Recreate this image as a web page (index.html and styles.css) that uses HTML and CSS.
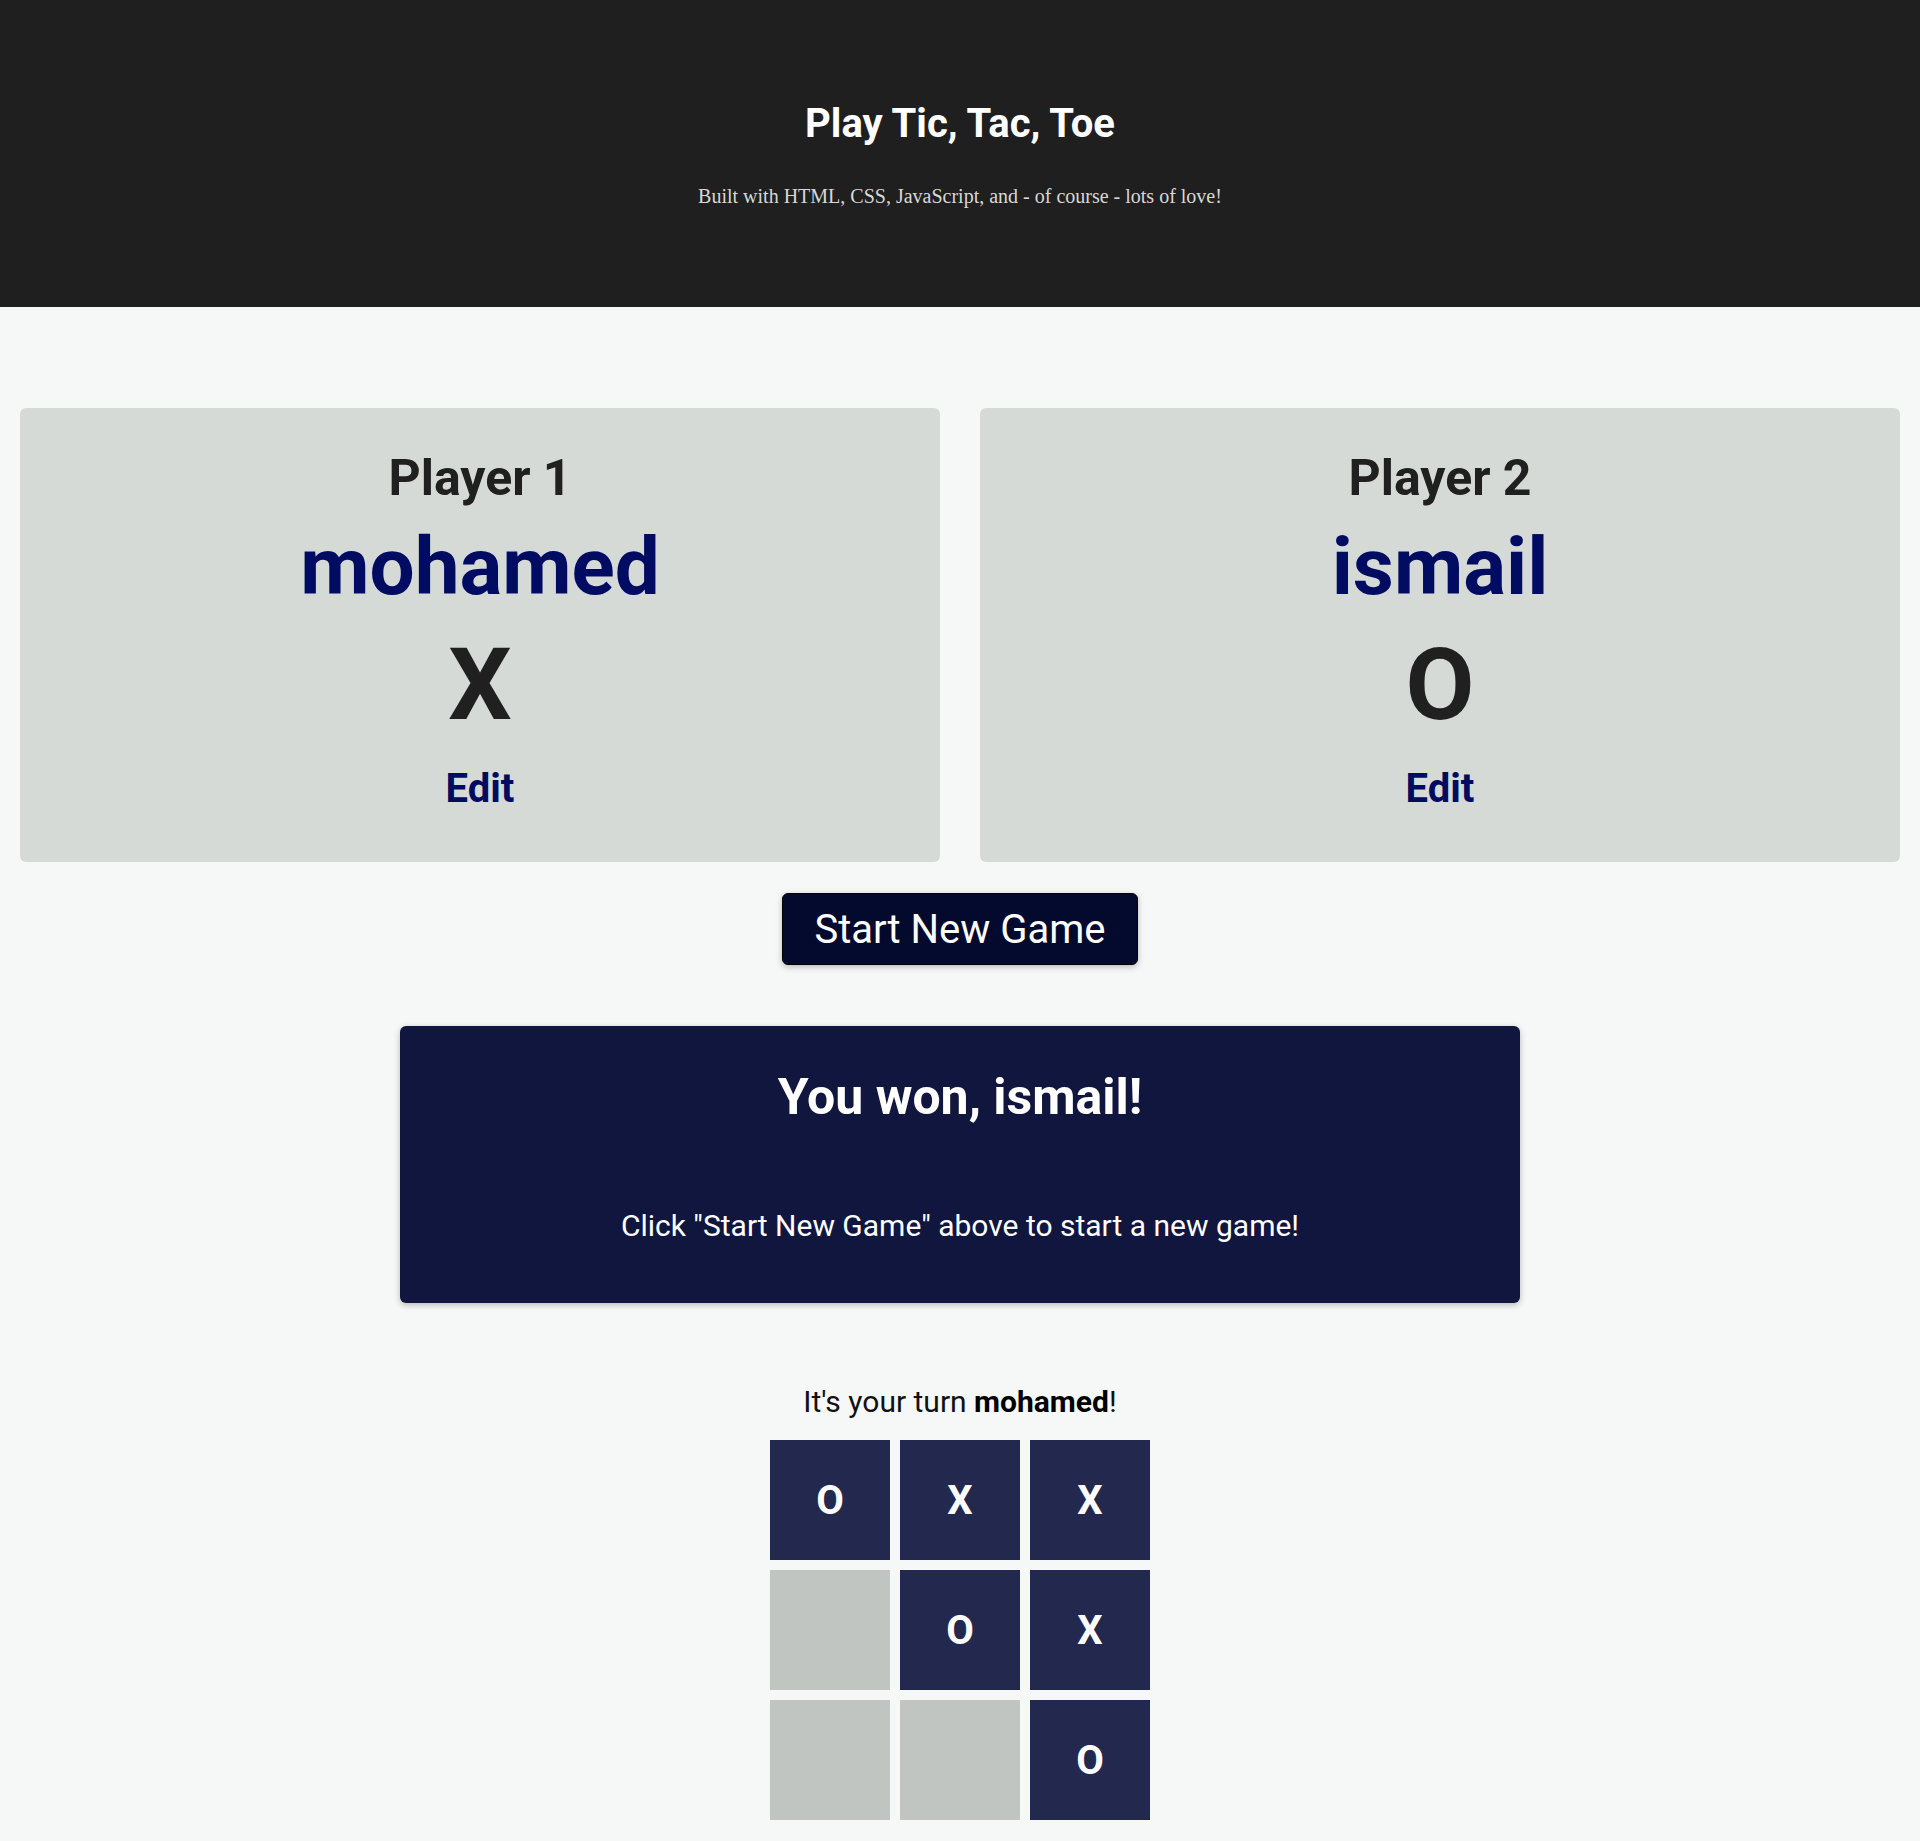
FILE: index.html
```html
<!DOCTYPE html>
<html lang="en">
<head>
<meta charset="utf-8">
<title>Tic Tac Toe</title>
<link rel="stylesheet" href="styles.css">
</head>
<body>
<header class="main-header">
  <h1 class="title">Play Tic, Tac, Toe</h1>
  <p class="subtitle">Built with HTML, CSS, JavaScript, and - of course - lots of love!</p>
</header>
<main class="content">
  <section class="players">
    <article class="player-card">
      <h2 class="player-label">Player 1</h2>
      <h3 class="player-name">mohamed</h3>
      <p class="player-symbol">X</p>
      <button class="edit-btn">Edit</button>
    </article>
    <article class="player-card">
      <h2 class="player-label">Player 2</h2>
      <h3 class="player-name">ismail</h3>
      <p class="player-symbol">O</p>
      <button class="edit-btn">Edit</button>
    </article>
  </section>
  <div class="actions">
    <button class="start-btn">Start New Game</button>
  </div>
  <section class="game-over">
    <h2 class="game-over-title">You won, ismail!</h2>
    <p class="game-over-text">Click "Start New Game" above to start a new game!</p>
  </section>
  <section class="game">
    <p class="turn">It's your turn <strong>mohamed</strong>!</p>
    <ol class="board">
      <li class="cell filled">O</li>
      <li class="cell filled">X</li>
      <li class="cell filled">X</li>
      <li class="cell"></li>
      <li class="cell filled">O</li>
      <li class="cell filled">X</li>
      <li class="cell"></li>
      <li class="cell"></li>
      <li class="cell filled">O</li>
    </ol>
  </section>
</main>
</body>
</html>
```
FILE: styles.css
```css
* {
  box-sizing: border-box;
}

html, body {
  margin: 0;
  padding: 0;
}

body {
  font-family: Roboto, "Liberation Sans", sans-serif;
  background: #f6f8f7;
  color: #202020;
}

.main-header {
  background: #1f1f1f;
  height: 307px;
  padding-top: 100px;
  text-align: center;
}

.title {
  margin: 0;
  font-size: 40px;
  line-height: 47px;
  font-weight: 700;
  color: #ffffff;
}

.subtitle {
  margin: 37px 0 0;
  font-family: "Liberation Serif", "DejaVu Serif", serif;
  font-size: 20px;
  line-height: 24px;
  color: #d8d8d8;
}

.content {
  padding: 101px 20px 21px;
}

.players {
  display: grid;
  grid-template-columns: 1fr 1fr;
  gap: 40px;
}

.player-card {
  background: #d6dad7;
  border-radius: 6px;
  height: 454px;
  padding-top: 41px;
  text-align: center;
  display: flex;
  flex-direction: column;
  align-items: center;
}

.player-label {
  margin: 0;
  font-size: 50px;
  line-height: 58px;
  font-weight: 700;
  color: #202020;
}

.player-name {
  margin: 12px 0 0;
  font-size: 80px;
  line-height: 96px;
  font-weight: 700;
  color: #000b62;
}

.player-symbol {
  margin: 12px 0 0;
  font-size: 100px;
  line-height: 115px;
  font-weight: 700;
  color: #202020;
}

.edit-btn {
  margin: 23px 0 0;
  padding: 0;
  border: none;
  background: none;
  font-family: Roboto, "Liberation Sans", sans-serif;
  font-size: 40px;
  line-height: 48px;
  font-weight: 700;
  color: #000b62;
  cursor: pointer;
}

.actions {
  display: flex;
  justify-content: center;
  margin-top: 31px;
}

.start-btn {
  width: 356px;
  height: 72px;
  padding: 0;
  border: 1px solid #000000;
  border-radius: 6px;
  background: #030a2e;
  color: #ffffff;
  font-family: Roboto, "Liberation Sans", sans-serif;
  font-size: 40px;
  font-weight: 400;
  box-shadow: 0 2px 6px rgba(0, 0, 0, 0.25);
  cursor: pointer;
}

.game-over {
  width: 1120px;
  margin: 61px auto 0;
  padding: 42px 20px 59px;
  background: #11163f;
  border-radius: 6px;
  box-shadow: 0 2px 6px rgba(0, 0, 0, 0.25);
  color: #ffffff;
  text-align: center;
}

.game-over-title {
  margin: 0;
  font-size: 50px;
  line-height: 58px;
  font-weight: 700;
}

.game-over-text {
  margin: 82px 0 0;
  font-size: 30px;
  line-height: 36px;
}

.game {
  margin-top: 81px;
  text-align: center;
}

.turn {
  margin: 0;
  font-size: 30px;
  line-height: 36px;
  color: #111111;
}

.turn strong {
  font-weight: 700;
  color: #000000;
}

.board {
  list-style: none;
  margin: 20px auto 0;
  padding: 0;
  width: 380px;
  display: grid;
  grid-template-columns: repeat(3, 120px);
  grid-auto-rows: 120px;
  gap: 10px;
}

.cell {
  background: #c1c5c1;
  display: flex;
  align-items: center;
  justify-content: center;
  font-size: 40px;
  font-weight: 700;
  color: #ffffff;
}

.cell.filled {
  background: #23284f;
}
```
